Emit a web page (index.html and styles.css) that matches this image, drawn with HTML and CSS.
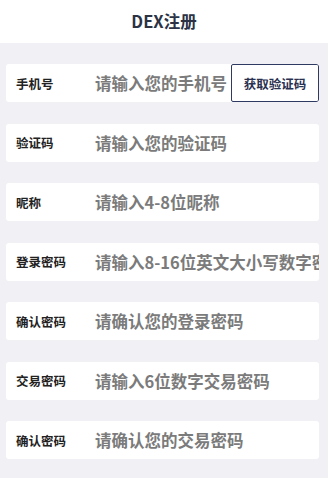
FILE: index.html
```html
<!DOCTYPE html>
<html lang="zh">
<head>
<meta charset="utf-8">
<title>DEX注册</title>
<link rel="stylesheet" href="styles.css">
</head>
<body>
<header class="topbar"><h1 class="title">DEX注册</h1></header>
<main class="form">
  <div class="row">
    <label class="label">手机号</label>
    <input class="field" placeholder="请输入您的手机号">
    <button class="code-btn">获取验证码</button>
  </div>
  <div class="row">
    <label class="label">验证码</label>
    <input class="field" placeholder="请输入您的验证码">
  </div>
  <div class="row">
    <label class="label">昵称</label>
    <input class="field" placeholder="请输入4-8位昵称">
  </div>
  <div class="row">
    <label class="label">登录密码</label>
    <input class="field" placeholder="请输入8-16位英文大小写数字密码">
  </div>
  <div class="row">
    <label class="label">确认密码</label>
    <input class="field" placeholder="请确认您的登录密码">
  </div>
  <div class="row">
    <label class="label">交易密码</label>
    <input class="field" placeholder="请输入6位数字交易密码">
  </div>
  <div class="row">
    <label class="label">确认密码</label>
    <input class="field" placeholder="请确认您的交易密码">
  </div>
</main>
</body>
</html>
```

FILE: styles.css
```css
* { box-sizing: border-box; }
html, body {
  margin: 0;
  padding: 0;
  height: 100%;
}
body {
  background: #f0f0f5;
  font-family: "Noto Sans CJK SC", "Noto Sans", sans-serif;
  overflow: hidden;
}
.topbar {
  height: 43px;
  background: #ffffff;
  display: flex;
  align-items: center;
  justify-content: center;
}
.title {
  margin: 0;
  font-size: 16.5px;
  font-weight: bold;
  color: #2b3345;
  line-height: 1;
}
.form {
  display: flex;
  flex-direction: column;
  gap: 21.5px;
  padding: 21px 9px 0 6px;
}
.row {
  height: 38px;
  background: #ffffff;
  border-radius: 3px;
  display: flex;
  align-items: center;
  padding-left: 10px;
  overflow: hidden;
}
.label {
  width: 79px;
  flex: none;
  font-size: 12.5px;
  font-weight: bold;
  color: #222222;
}
.field {
  flex: 1;
  min-width: 0;
  height: 100%;
  border: none;
  outline: none;
  background: transparent;
  padding: 0;
  font-family: inherit;
  font-size: 16.5px;
  font-weight: bold;
  color: #333;
}
.field::placeholder {
  color: #7b7b7b;
  opacity: 1;
}
.code-btn {
  flex: none;
  width: 88px;
  height: 38px;
  border: 1px solid #2f3a63;
  border-radius: 2px;
  background: #ffffff;
  font-family: inherit;
  font-size: 12.5px;
  font-weight: bold;
  color: #2a3050;
  padding: 0;
}
```
